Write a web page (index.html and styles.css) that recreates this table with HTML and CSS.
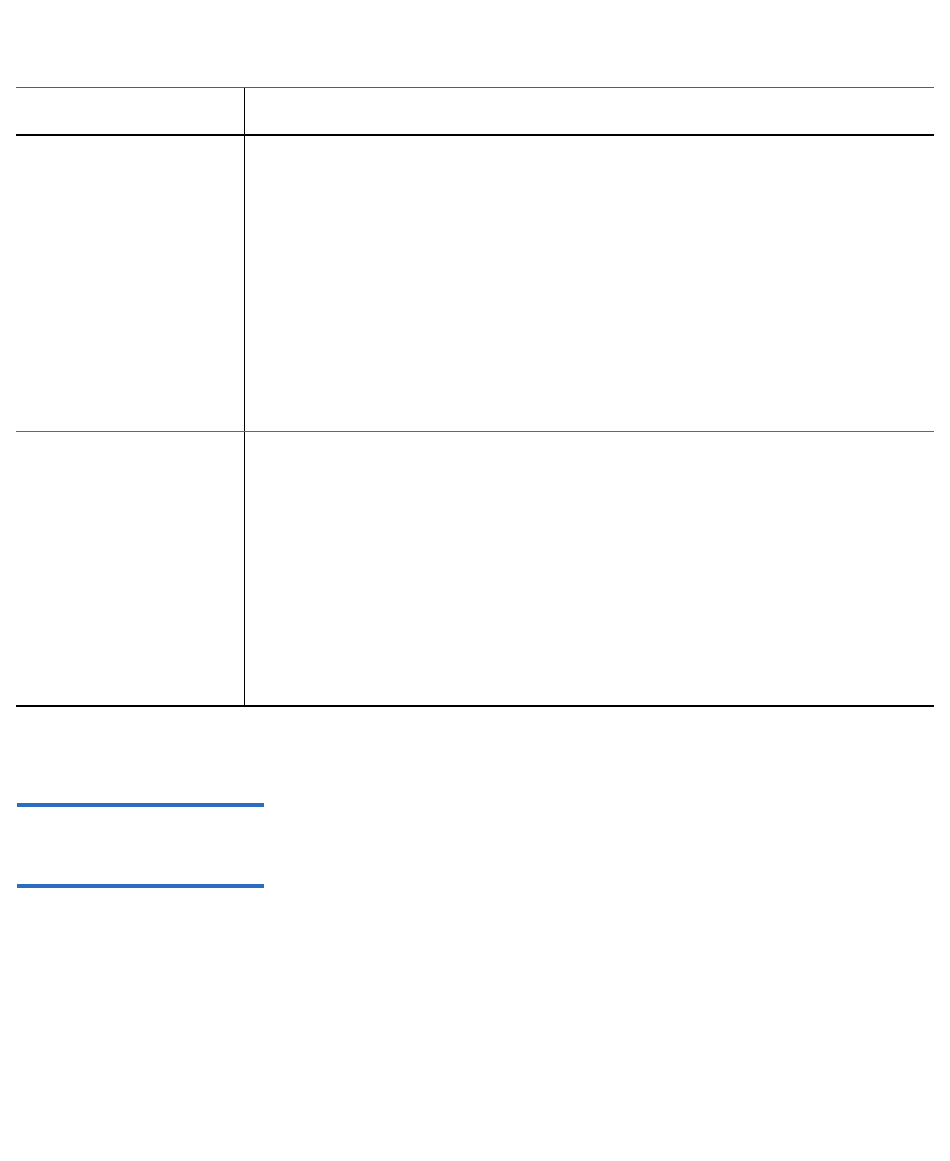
FILE: index.html
```html
<!DOCTYPE html>
<html lang="en">
<head>
  <meta charset="UTF-8" />
  <title>Table</title>
  <link rel="stylesheet" href="styles.css">
</head>
<body>
  <div class="table">
    <div class="row head">
      <div class="cell key"></div>
      <div class="cell"></div>
    </div>
    <div class="row first">
      <div class="cell key"></div>
      <div class="cell"></div>
    </div>
    <div class="row last">
      <div class="cell key"></div>
      <div class="cell"></div>
    </div>
  </div>

  <div class="section">
    <div class="rule"></div>
    <div class="rule second"></div>
  </div>
</body>
</html>
```

FILE: styles.css
```css
body {
  margin: 0;
  font-family: 'Liberation Sans', sans-serif;
  background: #fff;
}

.table {
  margin: 87px 16px 0 16px;
  border-top: 1px solid #5c5c5c;
}

.row {
  display: grid;
  grid-template-columns: 229px 1fr;
}

.cell.key {
  border-right: 1px solid #000;
}

.head {
  height: 46px;
  border-bottom: 2px solid #000;
}

.first {
  height: 295px;
  border-bottom: 1px solid #666;
}

.last {
  height: 273px;
  border-bottom: 2px solid #000;
}

.section {
  padding: 96px 0 0 17px;
}

.rule {
  width: 247px;
  height: 4px;
  background: #2b6dbf;
}

.rule.second {
  margin-top: 77px;
}
```
